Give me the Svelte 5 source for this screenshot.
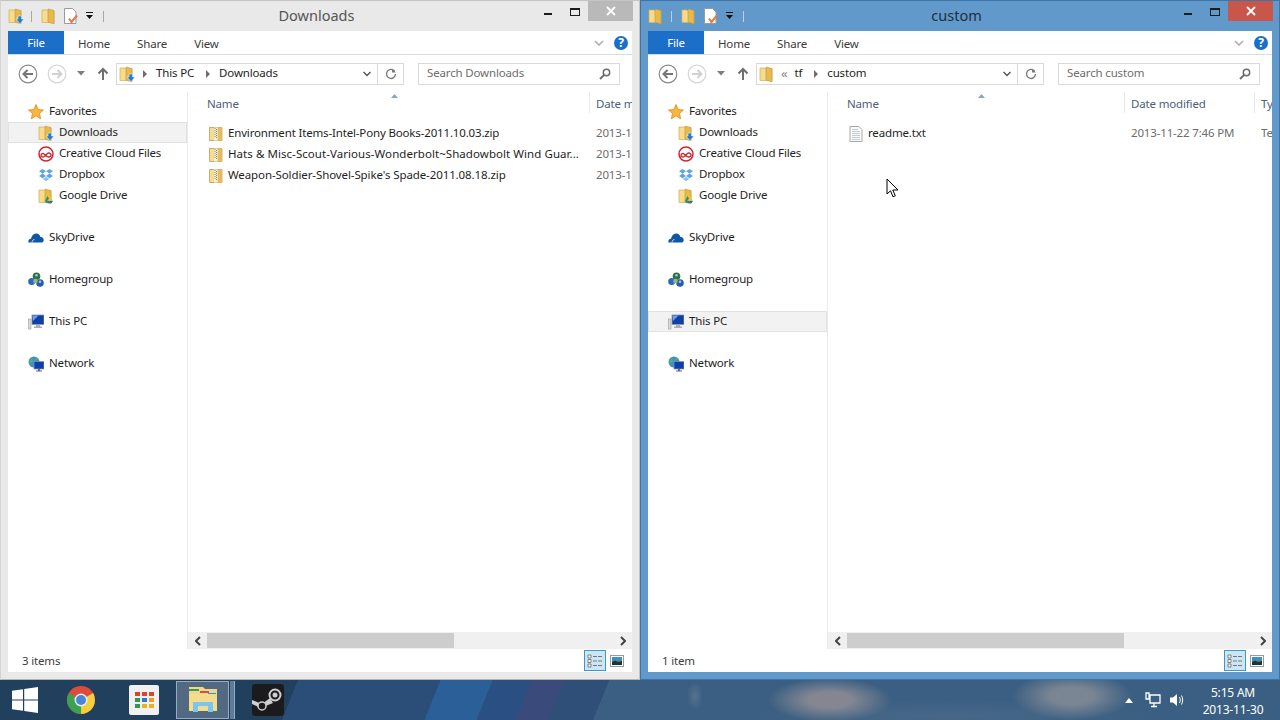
<script>
  const navGroups = [
    [
      { label: 'Favorites', icon: 'star', head: true },
      { label: 'Downloads', icon: 'dl', sub: true, key: 'downloads' },
      { label: 'Creative Cloud Files', icon: 'cc', sub: true },
      { label: 'Dropbox', icon: 'dropbox', sub: true },
      { label: 'Google Drive', icon: 'gdrive', sub: true }
    ],
    [{ label: 'SkyDrive', icon: 'sky', head: true }],
    [{ label: 'Homegroup', icon: 'home', head: true }],
    [{ label: 'This PC', icon: 'pc', head: true, key: 'pc' }],
    [{ label: 'Network', icon: 'net', head: true }]
  ];

  const windows = [
    {
      title: 'Downloads',
      active: false,
      search: 'Search Downloads',
      current: 'downloads',
      status: '3 items',
      crumbs: ['This PC', 'Downloads'],
      thumb: 247,
      columns: [
        { label: 'Name', width: 382 },
        { label: 'Date m', width: 60 }
      ],
      nameWidth: 388,
      dateWidth: 60,
      sortAt: 203,
      files: [
        { name: 'Environment Items-Intel-Pony Books-2011.10.03.zip', date: '2013-1', icon: 'zip', spacing: -0.16 },
        { name: 'Hats & Misc-Scout-Various-Wonderbolt~Shadowbolt Wind Guar...', date: '2013-1', icon: 'zip', spacing: 0.06 },
        { name: "Weapon-Soldier-Shovel-Spike's Spade-2011.08.18.zip", date: '2013-1', icon: 'zip', spacing: -0.1 }
      ]
    },
    {
      title: 'custom',
      active: true,
      search: 'Search custom',
      current: 'pc',
      status: '1 item',
      crumbs: ['tf', 'custom'],
      thumb: 277,
      columns: [
        { label: 'Name', width: 277 },
        { label: 'Date modified', width: 130 },
        { label: 'Ty', width: 30 }
      ],
      nameWidth: 283,
      dateWidth: 130,
      sortAt: 150,
      files: [{ name: 'readme.txt', date: '2013-11-22 7:46 PM', type: 'Te', icon: 'txt', spacing: -0.16 }]
    }
  ];
</script>

{#snippet folder()}
  <path d="M1 2h5l1 1h6v11.500H1z" fill="#f6dc8c" stroke="#cdb060" stroke-width=".7" />
  <path d="M7 1l6 1.500V16l-6-2z" fill="#e8ba4c" stroke="#bd9840" stroke-width=".6" />
{/snippet}

{#snippet dlArrow()}
  <path d="M10 8h3.500v3H16l-4 4.800L8 11h2z" fill="#1f7fd6" stroke="#fff" stroke-width=".5" />
{/snippet}

{#snippet icon(name)}
  <svg class="ico" viewBox="0 0 16 16" width="16" height="16">
    {#if name === 'star'}
      <path d="M8 .5l2.200 5 5.300.5-4 3.500 1.200 5.300L8 11.800 3.300 14.800l1.200-5.300-4-3.500 5.300-.5z" fill="#f6b73c" stroke="#e2882a" stroke-width=".8" />
    {:else if name === 'dl'}
      {@render folder()}
      {@render dlArrow()}
    {:else if name === 'cc'}
      <circle cx="8" cy="8" r="7" fill="#fff" stroke="#d2232a" stroke-width="1.500" />
      <path d="M3 9.500c0-2 2-2.500 3-1.500l3 2.500c1.500 1 4 .5 4-1.500s-2.500-2.500-3.500-1.500L6.500 10.500C5 11.500 3 11 3 9.500z" fill="none" stroke="#d2232a" stroke-width="1.400" />
    {:else if name === 'dropbox'}
      <path d="M4.500 2L8 4.300 4.500 6.600 1 4.300zM11.500 2L15 4.300l-3.500 2.300L8 4.300zM4.500 6.600L8 8.900l-3.500 2.300L1 8.900zM11.500 6.600L15 8.900l-3.500 2.300L8 8.900z" fill="#5aa6e8" />
      <path d="M4.700 12l3.300-2.200 3.300 2.200L8 14.200z" fill="#8cc3f0" />
    {:else if name === 'gdrive'}
      {@render folder()}
      <path d="M9.500 8h2.500l3 5h-2.500z" fill="#f5c518" />
      <path d="M9.500 8L7 13l1.200 2 2.700-4.700z" fill="#1f9d55" />
      <path d="M8.200 15h5.600l1.200-2H9.500z" fill="#2a6fdb" />
    {:else if name === 'sky'}
      <path d="M.5 12.500c-.6-2 .6-3.800 2.500-3.800C3.800 5 6.500 2.500 9.700 3.800c1.800.7 2.500 2 2.700 3.300 2-.2 3.300 1.300 3.300 3 0 1.400-.8 2.400-1.800 2.400z" fill="#0f56a8" />
      <path d="M4 12.500c0-1.800 1-2.700 2.500-2.900" fill="none" stroke="#fff" stroke-width=".8" />
    {:else if name === 'home'}
      <circle cx="8.500" cy="4.300" r="3.800" fill="#2f6f4f" />
      <circle cx="3.700" cy="9.500" r="3.500" fill="#3167b8" />
      <circle cx="12" cy="11" r="3.800" fill="#2659b0" />
      <circle cx="7.500" cy="9" r="2.300" fill="#8ec06a" />
      <circle cx="8.500" cy="3.300" r="1.300" fill="#9ed0a5" />
      <circle cx="12" cy="9.800" r="1.300" fill="#9cc4ef" />
    {:else if name === 'pc'}
      <rect x="0.500" y="5" width="2.500" height="10" fill="#d8dcd8" stroke="#8a8f8a" stroke-width=".5" />
      <rect x="4" y="1" width="12" height="9.500" fill="#0f3fa8" stroke="#8b96a5" stroke-width=".8" />
      <path d="M4.500 1.500h6L5 7z" fill="#6d9ee8" />
      <path d="M8 10.500h4v2h2v1.500H6V12.500h2z" fill="#a9aeb5" />
    {:else if name === 'net'}
      <circle cx="6" cy="6" r="5.500" fill="#3b8fd6" />
      <path d="M2.500 2.500c2 0 3 1.500 2.500 3S2 7 1 6.500zM7 1c1 1.500 3 1 3.500 2.500L8 5z" fill="#5fae55" />
      <rect x="6" y="5.500" width="10" height="7.500" fill="#0f3fa8" stroke="#8b96a5" stroke-width=".7" />
      <path d="M10 13h2v1.500h2v1H8v-1h2z" fill="#5d6c7c" />
    {:else if name === 'zip'}
      <path d="M1.500 1.500h12.500v13H1.500z" fill="#f4dc92" stroke="#bda05a" stroke-width=".8" />
      <path d="M9.500 1.500H14v13H9.500z" fill="#e4bb5e" />
      <rect x="6" y="1.500" width="3.500" height="13" fill="#f8efcf" />
      <path d="M7 2v9M8.500 3v9" stroke="#85857b" stroke-width="1" stroke-dasharray="1 1" />
    {:else if name === 'txt'}
      <path d="M2 .5h9l3 3v12H2z" fill="#fbfbfb" stroke="#a8a8a8" />
      <path d="M4 3.500h6M4 5.500h8M4 7.500h8M4 9.500h8M4 11.500h8M4 13.500h8" stroke="#c4cbd2" />
    {/if}
  </svg>
{/snippet}

{#snippet explorer(win)}
  <section class="window" class:active={win.active}>
    <header class="titlebar">
      <div class="quick">
        <svg class="ico" viewBox="0 0 16 16" width="16" height="16">
          {@render folder()}
          {#if !win.active}{@render dlArrow()}{/if}
        </svg>
        <i class="qsep"></i>
        <svg class="ico q2" viewBox="0 0 16 16" width="16" height="16">{@render folder()}</svg>
        <svg class="ico q3" viewBox="0 0 16 16" width="16" height="16">
          <path d="M1.500 .5h8l3.500 3.500v11.500h-11.500z" fill="#fff" stroke="#9a9a9a" />
          <path d="M6 10.500l2.500 3.500L14 7.500" fill="none" stroke="#e07a4a" stroke-width="2" />
        </svg>
        <svg class="qdrop" viewBox="0 0 8 8" width="8" height="8"><path d="M0 0h7v1H0zM0 3h7L3.500 7z" fill="#111" /></svg>
        <i class="qsep last"></i>
      </div>
      <h1>{win.title}</h1>
      <div class="caption">
        <span class="min"></span>
        <span class="max"></span>
        <span class="close">
          <svg viewBox="0 0 10 10" width="10" height="10"><path d="M1 1l8 8M9 1l-8 8" stroke="#fff" stroke-width="1.800" /></svg>
        </span>
      </div>
    </header>

    <div class="body">
      <div class="ribbon">
        <span class="file">File</span>
        <span class="tab t1">Home</span>
        <span class="tab">Share</span>
        <span class="tab">View</span>
        <span class="grow"></span>
        <svg viewBox="0 0 10 6" width="10" height="6"><path d="M1 1l4 4 4-4" fill="none" stroke="#a6acb2" stroke-width="1.500" /></svg>
        <span class="help">?</span>
      </div>

      <div class="navbar">
        <svg class="round" viewBox="0 0 20 20" width="20" height="20">
          <circle cx="10" cy="10" r="8.800" fill="#fff" stroke="#8b8b8b" stroke-width="1.200" />
          <path d="M15 10H6M9.500 6L5.500 10l4 4" fill="none" stroke="#777" stroke-width="2" />
        </svg>
        <svg class="round fwd" viewBox="0 0 20 20" width="20" height="20">
          <circle cx="10" cy="10" r="8.800" fill="#fff" stroke="#d6d6d6" stroke-width="1.200" />
          <path d="M5 10h9M10.500 6l4 4-4 4" fill="none" stroke="#d0d0d0" stroke-width="2" />
        </svg>
        <svg class="recent" viewBox="0 0 8 5" width="8" height="5"><path d="M0 0h8L4 4.500z" fill="#7d7d7d" /></svg>
        <svg class="up" viewBox="0 0 12 14" width="12" height="14"><path d="M6 13V2M1.500 6.500L6 2l4.500 4.500" fill="none" stroke="#6f6f6f" stroke-width="2" /></svg>
        <div class="address">
          <svg class="ico" viewBox="0 0 16 16" width="16" height="16">
            {@render folder()}
            {#if !win.active}{@render dlArrow()}{/if}
          </svg>
          {#if win.active}
            <span class="chev">«</span>
            <span class="crumb tf">{win.crumbs[0]}</span>
            <span class="tri"></span>
            <span class="crumb">{win.crumbs[1]}</span>
          {:else}
            <span class="tri first"></span>
            <span class="crumb">{win.crumbs[0]}</span>
            <span class="tri"></span>
            <span class="crumb">{win.crumbs[1]}</span>
          {/if}
          <span class="grow"></span>
          <svg class="adrop" viewBox="0 0 8 6" width="8" height="6"><path d="M.5 1l3.500 3.500L7.500 1" fill="none" stroke="#555" stroke-width="1.500" /></svg>
          <span class="refresh">
            <svg viewBox="0 0 12 12" width="12" height="12"><path d="M9.800 3.500A4.500 4.500 0 1 0 10.500 6" fill="none" stroke="#7a7a7a" stroke-width="1.400" /><path d="M7 .5v4h3.800z" fill="#7a7a7a" /></svg>
          </span>
        </div>
        <div class="search">
          <span class="lift">{win.search}</span>
          <svg viewBox="0 0 12 12" width="12" height="12"><circle cx="7.500" cy="4.500" r="3.200" fill="none" stroke="#6e6e6e" stroke-width="1.500" /><path d="M5 7L1 11" stroke="#6e6e6e" stroke-width="2" /></svg>
        </div>
      </div>

      <div class="main">
        <nav class="tree">
          {#each navGroups as group}
            <ul>
              {#each group as item}
                <li class:sub={item.sub} class:current={item.key === win.current}>
                  {@render icon(item.icon)}
                  <span class="lift">{item.label}</span>
                </li>
              {/each}
            </ul>
          {/each}
        </nav>

        <div class="pane">
          <div class="columns">
            {#each win.columns as col}
              <span class="col" style="width: {col.width}px">{col.label}</span>
            {/each}
            <svg class="sort" style="left: {win.sortAt}px" viewBox="0 0 7 4" width="7" height="4"><path d="M0 4L3.500 0 7 4z" fill="#7fa8c9" /></svg>
          </div>
          <div class="rows">
            {#each win.files as f}
              <div class="row">
                <div class="name" style="width: {win.nameWidth}px">
                  {@render icon(f.icon)}
                  <span class="lift" style="letter-spacing: {f.spacing}px">{f.name}</span>
                </div>
                <span class="cell lift" style="width: {win.dateWidth}px">{f.date}</span>
                {#if f.type}<span class="cell lift">{f.type}</span>{/if}
              </div>
            {/each}
          </div>
          {#if win.active}
            <svg class="cursor" viewBox="0 0 13 20" width="13" height="20"><path d="M1 1v15l3.500-3.200 2.500 6 2.300-1-2.500-5.800H12z" fill="#fff" stroke="#000" stroke-width="1" /></svg>
          {/if}
          <div class="hscroll">
            <span class="arrow"><svg viewBox="0 0 6 10" width="6" height="10"><path d="M5 1L1 5l4 4" fill="none" stroke="#444" stroke-width="2" /></svg></span>
            <span class="thumb" style="width: {win.thumb}px"></span>
            <span class="grow"></span>
            <span class="arrow"><svg viewBox="0 0 6 10" width="6" height="10"><path d="M1 1l4 4-4 4" fill="none" stroke="#444" stroke-width="2" /></svg></span>
          </div>
        </div>
      </div>

      <footer class="status">
        <span class="count">{win.status}</span>
        <span class="grow"></span>
        <span class="view on">
          <svg viewBox="0 0 16 14" width="16" height="14"><path d="M1 1h3v3H1zM1 5.500h3v3H1zM1 10h3v3H1z" fill="#fff" stroke="#666" stroke-width=".8" /><path d="M6 2.500h4M11 2.500h4M6 7h4M11 7h4M6 11.500h4M11 11.500h4" stroke="#777" /></svg>
        </span>
        <span class="view">
          <svg viewBox="0 0 14 12" width="14" height="12"><rect x=".5" y=".5" width="13" height="11" fill="#fff" stroke="#9a9a9a" /><rect x="2" y="2" width="10" height="8" fill="#3f8fc4" /><path d="M2 7l3-1.500 3 1.500 4-1v4H2z" fill="#233" /></svg>
        </span>
      </footer>
    </div>
  </section>
{/snippet}

<div class="desktop">
  <div class="windows">
    {#each windows as win}
      {@render explorer(win)}
    {/each}
  </div>

  <div class="taskbar">
    <span class="start">
      <svg viewBox="0 0 26 26" width="26" height="26"><path d="M0 3.700L11 2.200V12.400H0zM12.200 2L26 0V12.400H12.200zM0 13.600H11V23.800L0 22.300zM12.200 13.600H26V26L12.200 24z" fill="#fff" /></svg>
    </span>
    <span class="app chrome">
      <svg viewBox="0 0 28 28" width="28" height="28">
        <circle cx="14" cy="14" r="14" fill="#dd4b3b" />
        <path d="M14 14L26.100 7a14 14 0 0 1-12 21z" fill="#f7ce3f" />
        <path d="M14 14L14 28A14 14 0 0 1 1.900 7z" fill="#3ba250" />
        <circle cx="14" cy="14" r="6.500" fill="#e9eef5" />
        <circle cx="14" cy="14" r="5" fill="#4a86d8" />
      </svg>
    </span>
    <span class="app apps">
      <span class="grid">
        {#each ['#d9452f', '#d9452f', '#d9452f', '#2f9a4d', '#2f78d0', '#ef9f1f', '#2f9a4d', '#efb01f', '#efb01f'] as c}
          <i style="background: {c}"></i>
        {/each}
      </span>
    </span>
    <span class="app explorer-btn">
      <svg viewBox="0 0 32 32" width="32" height="32">
        <path d="M2 3h14l2 2h12v22H2z" fill="#f0d88a" />
        <path d="M2 5h10v2H2z" fill="#3f9a4c" />
        <path d="M13 7h9v2h-9z" fill="#d9503a" />
        <path d="M21 9h8v2h-8z" fill="#3b8fd6" />
        <path d="M2 10h28v17H2z" fill="#f4dc8f" />
        <path d="M6 28V18h20v10h-5v-6H11v6z" fill="#7cc6ee" />
      </svg>
    </span>
    <span class="sliver"></span>
    <span class="app steam">
      <svg viewBox="0 0 32 32" width="32" height="32">
        <rect width="32" height="32" rx="3" fill="#1b1b1d" />
        <circle cx="23" cy="11" r="5.500" fill="none" stroke="#cfcfcf" stroke-width="2" />
        <circle cx="23" cy="11" r="2.500" fill="#cfcfcf" />
        <path d="M0 16l10 4 8-6 3 5-10 4-2 1-9-4z" fill="#cfcfcf" />
        <circle cx="10" cy="22" r="4" fill="#1b1b1d" stroke="#cfcfcf" stroke-width="1.500" />
      </svg>
    </span>
    <span class="grow"></span>
    <div class="tray">
      <svg class="tray-arrow" viewBox="0 0 8 5" width="8" height="5"><path d="M0 5L4 0l4 5z" fill="#fff" /></svg>
      <svg viewBox="0 0 16 16" width="16" height="16"><path d="M1 1h3v6H1zM5 3h10v8H5z" fill="none" stroke="#fff" stroke-width="1.300" /><path d="M9 11v3M6 14.500h6" stroke="#fff" stroke-width="1.300" /></svg>
      <svg viewBox="0 0 16 16" width="16" height="16"><path d="M1 5.500h3L8 2v12l-4-3.500H1z" fill="#fff" /><path d="M10.500 5c1 2 1 4 0 6M12.500 3.500c1.600 3 1.600 6 0 9" fill="none" stroke="#fff" /></svg>
    </div>
    <div class="clock">
      <span>5:15 AM</span>
      <span>2013-11-30</span>
    </div>
  </div>
</div>

<style>
  :global(body) {
    margin: 0;
    overflow: hidden;
  }

  .desktop {
    width: 1280px;
    height: 720px;
    font-family: 'Noto Sans', 'Open Sans', sans-serif;
    font-size: 11.5px;
    letter-spacing: -0.16px;
    color: #1e1e1e;
    display: flex;
    flex-direction: column;
  }

  .windows {
    display: flex;
    height: 680px;
  }

  .window {
    width: 640px;
    box-sizing: border-box;
    background: #e9e9e9;
    border: 1px solid #c4c4c4;
    border-bottom-color: #b5b5b5;
    border-left-color: #d4d4d4;
    padding: 0 7px 7px;
    display: flex;
    flex-direction: column;
  }

  .window.active {
    background: #6199cb;
    border-color: #3f74a6;
  }

  .titlebar {
    height: 30px;
    flex: none;
    display: flex;
    align-items: flex-start;
  }

  .quick {
    display: flex;
    align-items: center;
    height: 30px;
  }

  .qsep {
    width: 1px;
    height: 11px;
    background: #a8a8a8;
    margin-left: 7px;
  }

  .active .qsep {
    background: #b9d0e6;
  }

  .q2 {
    margin-left: 9px;
  }

  .q3 {
    margin-left: 6px;
  }

  .qdrop {
    margin-left: 7px;
  }

  .qsep.last {
    margin-left: 9px;
  }

  .titlebar h1 {
    flex: 1;
    margin: 0;
    font-size: 14.500px;
    font-weight: 400;
    letter-spacing: 0;
    line-height: 29px;
    text-align: center;
    color: #555;
    padding-right: 15px;
  }

  .active h1 {
    color: #1d2f42;
  }

  .caption {
    display: flex;
    align-items: flex-start;
    margin-right: -1px;
  }

  .min {
    width: 8px;
    height: 2px;
    background: #1c1c1c;
    margin: 12px 18px 0 0;
  }

  .max {
    width: 10px;
    height: 8px;
    box-sizing: border-box;
    border: 1px solid #1c1c1c;
    border-top-width: 2px;
    margin: 7px 8px 0 0;
  }

  .close {
    width: 45px;
    height: 20px;
    background: #b9b9b9;
    display: flex;
    align-items: center;
    justify-content: center;
  }

  .active .close {
    background: #c9564a;
  }

  .body {
    flex: 1;
    min-height: 0;
    background: #fff;
    display: flex;
    flex-direction: column;
    overflow: hidden;
  }

  .ribbon {
    height: 23px;
    flex: none;
    border-bottom: 1px solid #dadbdc;
    display: flex;
    align-items: center;
    padding-right: 4px;
  }

  .file {
    width: 56px;
    height: 23px;
    background: #1c6fc9;
    color: #fff;
    text-align: center;
    line-height: 23px;
    flex: none;
  }

  .tab {
    color: #3b3b3b;
    margin-left: 27px;
    padding-top: 2px;
  }

  .tab.t1 {
    margin-left: 14px;
  }

  .help {
    width: 14px;
    height: 14px;
    border-radius: 50%;
    background: #1a6fc8;
    color: #fff;
    font-weight: 700;
    font-size: 12px;
    line-height: 14px;
    text-align: center;
    margin-left: 10px;
  }

  .grow {
    flex: 1;
  }

  .lift {
    padding-bottom: 2px;
  }

  .navbar {
    height: 37px;
    flex: none;
    display: flex;
    align-items: center;
    padding: 0 12px 0 10px;
  }

  .fwd {
    margin-left: 9px;
  }

  .recent {
    margin-left: 10px;
  }

  .up {
    margin-left: 12px;
  }

  .address {
    margin-left: 7px;
    width: 288px;
    height: 22px;
    box-sizing: border-box;
    border: 1px solid #d9d9d9;
    display: flex;
    align-items: center;
    padding-left: 2px;
  }

  .crumb {
    padding-bottom: 2px;
  }

  .tri {
    width: 0;
    height: 0;
    border-left: 4px solid #6e6e6e;
    border-top: 4px solid transparent;
    border-bottom: 4px solid transparent;
    margin: 0 9px 0 12px;
  }

  .tri.first {
    margin-left: 8px;
  }

  .chev {
    color: #8a8a8a;
    margin-left: 6px;
    font-size: 13px;
    padding-bottom: 2px;
  }

  .crumb.tf {
    margin-left: 7px;
  }

  .adrop {
    margin-right: 6px;
  }

  .refresh {
    width: 25px;
    height: 20px;
    border-left: 1px solid #d9d9d9;
    display: flex;
    align-items: center;
    justify-content: center;
  }

  .search {
    margin-left: 14px;
    flex: 1;
    height: 22px;
    box-sizing: border-box;
    border: 1px solid #d9d9d9;
    display: flex;
    align-items: center;
    justify-content: space-between;
    padding: 0 8px;
    color: #6d6d6d;
  }

  .main {
    flex: 1;
    min-height: 0;
    display: flex;
  }

  .tree {
    width: 180px;
    flex: none;
    box-sizing: border-box;
    border-right: 1px solid #ececec;
    padding-top: 9px;
  }

  .tree ul {
    list-style: none;
    margin: 0 0 21px;
    padding: 0;
  }

  .tree li {
    height: 21px;
    box-sizing: border-box;
    display: flex;
    align-items: center;
    gap: 5px;
    padding-left: 20px;
    border: 1px solid transparent;
    border-left: none;
  }

  .tree li.sub {
    padding-left: 30px;
  }

  .tree li.current {
    background: #f2f2f2;
    border-color: #e2e2e2;
    border-left: 1px solid #e2e2e2;
  }

  .tree li.current.sub {
    padding-left: 29px;
  }

  .tree li.current:not(.sub) {
    padding-left: 19px;
  }

  .pane {
    flex: 1;
    min-width: 0;
    position: relative;
    display: flex;
    flex-direction: column;
  }

  .columns {
    height: 23px;
    flex: none;
    display: flex;
    padding-left: 19px;
    position: relative;
    white-space: nowrap;
    overflow: hidden;
  }

  .col {
    color: #4c607a;
    flex: none;
    box-sizing: border-box;
    height: 21px;
    line-height: 23px;
  }

  .col + .col {
    border-left: 1px solid #e8e8e8;
    padding-left: 6px;
  }

  .sort {
    position: absolute;
    top: 2px;
  }

  .rows {
    flex: 1;
    padding-top: 8px;
    overflow: hidden;
  }

  .row {
    height: 21px;
    display: flex;
    align-items: center;
    padding-left: 20px;
    white-space: nowrap;
  }

  .name {
    display: flex;
    align-items: center;
    gap: 4px;
    flex: none;
    box-sizing: border-box;
  }

  .cell {
    color: #6d6d6d;
    flex: none;
    overflow: hidden;
  }

  .cursor {
    position: absolute;
    left: 58px;
    top: 86px;
  }

  .hscroll {
    height: 17px;
    flex: none;
    background: #f0f0f0;
    display: flex;
    align-items: center;
  }

  .arrow {
    width: 19px;
    height: 15px;
    display: flex;
    align-items: center;
    justify-content: center;
  }

  .thumb {
    height: 15px;
    background: #cdcdcd;
  }

  .status {
    height: 23px;
    flex: none;
    display: flex;
    align-items: center;
    color: #3c3c3c;
    padding-right: 4px;
  }

  .count {
    padding-left: 14px;
    padding-bottom: 1px;
  }

  .view {
    width: 22px;
    height: 21px;
    box-sizing: border-box;
    display: flex;
    align-items: center;
    justify-content: center;
  }

  .view.on {
    background: #cde6f7;
    border: 1px solid #3e9bc0;
  }

  .taskbar {
    height: 40px;
    flex: none;
    display: flex;
    align-items: center;
    background:
      radial-gradient(ellipse 62px 22px at 830px 20px, rgba(150, 145, 150, 0.8) 35%, transparent),
      radial-gradient(ellipse 60px 24px at 1072px 16px, rgba(150, 150, 155, 0.7) 35%, transparent),
      radial-gradient(ellipse 8px 14px at 695px 16px, rgba(140, 150, 165, 0.35), transparent),
      radial-gradient(ellipse 200px 16px at 950px 36px, rgba(100, 125, 150, 0.3), transparent),
      linear-gradient(112deg, #20405e 0 23%, #2a4e78 23% 34%, #2b5f97 34% 38%, #2a4f82 38% 41%, #3a4a7a 41% 43.500%, #2f4f78 43.500% 47%, #3b5f82 47% 100%);
    color: #fff;
  }

  .start {
    width: 26px;
    height: 26px;
    margin-left: 12px;
  }

  .app {
    display: flex;
    align-items: center;
    justify-content: center;
    flex: none;
  }

  .chrome {
    margin-left: 29px;
  }

  .apps {
    margin-left: 34px;
    width: 30px;
    height: 30px;
    background: #f1f1f1;
    border-radius: 2px;
  }

  .grid {
    display: grid;
    grid-template-columns: repeat(3, 5px);
    grid-auto-rows: 4px;
    gap: 2px 2px;
  }

  .grid i {
    display: block;
  }

  .explorer-btn {
    margin-left: 17px;
    width: 53px;
    height: 38px;
    box-sizing: border-box;
    background: rgba(255, 255, 255, 0.22);
    border: 1px solid rgba(200, 215, 230, 0.6);
  }

  .sliver {
    width: 4px;
    height: 38px;
    margin-left: 1px;
    background: rgba(170, 195, 225, 0.45);
    border-right: 1px solid rgba(200, 215, 230, 0.5);
  }

  .steam {
    margin-left: 17px;
  }

  .tray {
    display: flex;
    align-items: center;
    gap: 8px;
  }

  .tray-arrow {
    margin-right: 4px;
  }

  .clock {
    width: 72px;
    margin: 0 11px 0 12px;
    padding-top: 1px;
    display: flex;
    flex-direction: column;
    align-items: center;
    font-size: 12px;
    letter-spacing: -0.2px;
    line-height: 17px;
  }
</style>
